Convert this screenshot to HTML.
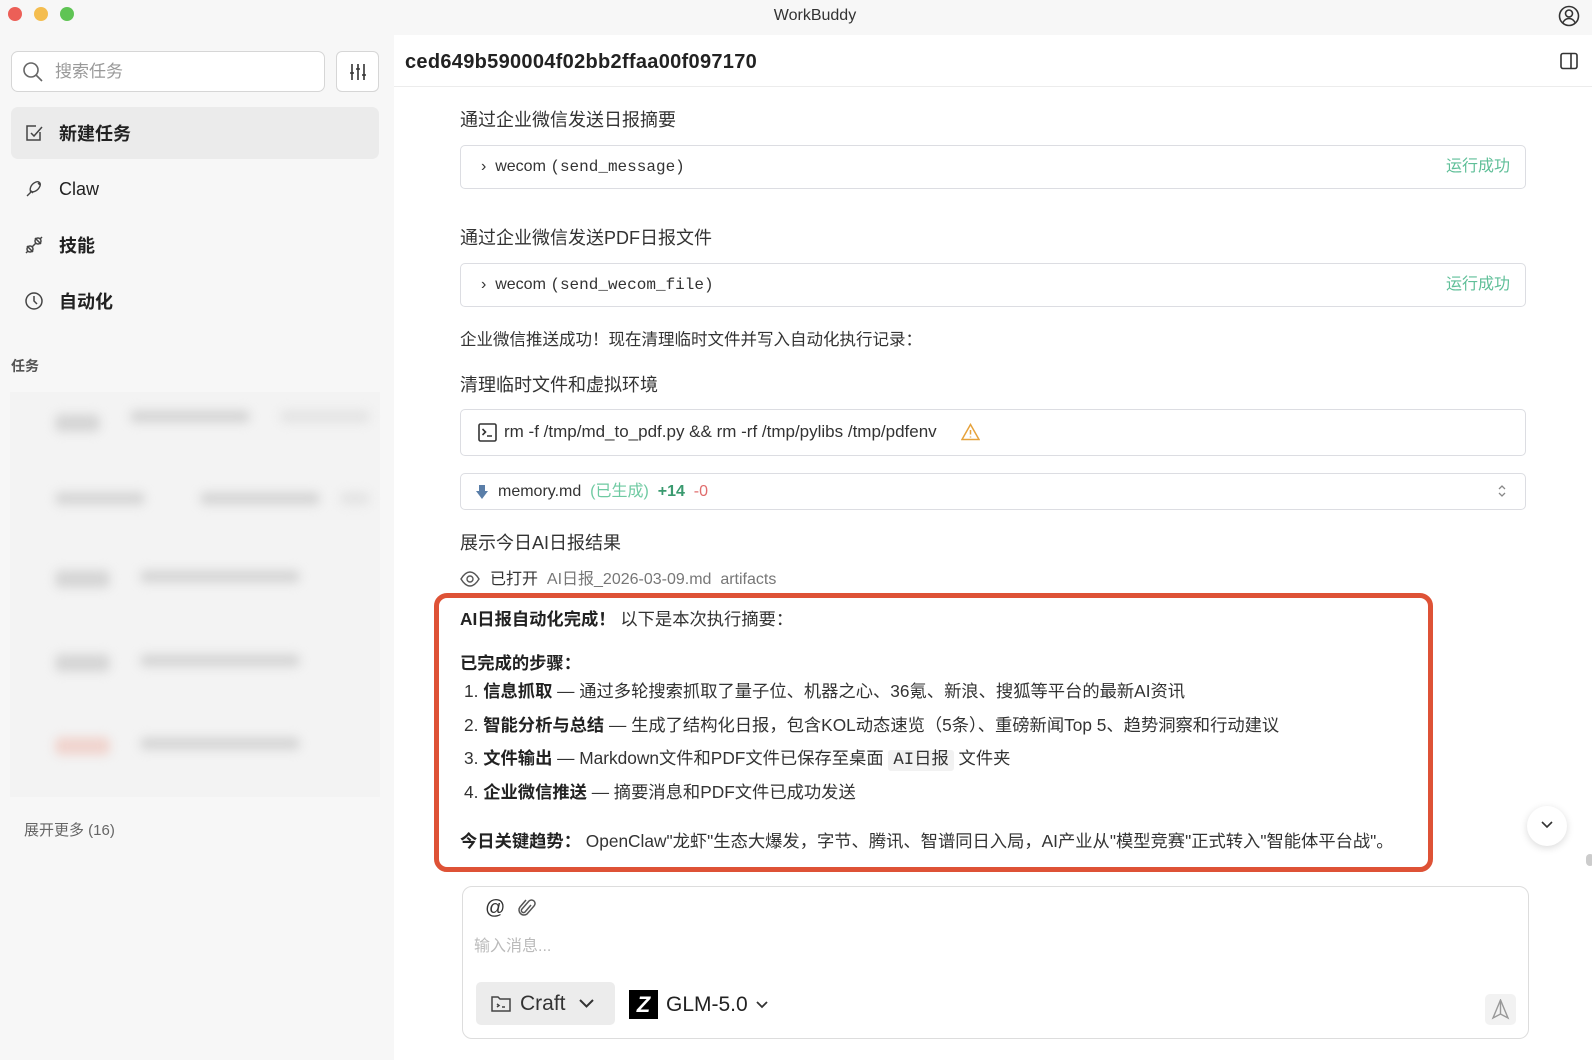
<!DOCTYPE html>
<html><head><meta charset="utf-8"><style>
*{box-sizing:border-box;margin:0;padding:0}
body{width:1592px;height:1060px;overflow:hidden;background:#f7f7f7;font-family:"Liberation Sans","Noto Sans CJK SC",sans-serif;color:#222;position:relative}
.a{position:absolute}
.t{white-space:nowrap;line-height:1.2}
.dot{width:14px;height:14px;border-radius:50%;top:7px}
.main{left:394px;top:35px;width:1198px;height:1025px;background:#fff}
.box{border:1px solid #dcdde2;border-radius:5px;background:#fff}
.mono{font-family:"Liberation Mono","Noto Sans CJK SC",monospace}
.h{font-size:18px;color:#333}
.ok{color:#5fbf98;font-size:16px}
.ln{font-size:17.3px;color:#333}
b{font-weight:700;color:#222}
.blur{filter:blur(5px);background:#d6d6d6;border-radius:6px;height:13px}
</style></head><body>
<div class="a dot" style="left:8px;background:#ec5f57"></div>
<div class="a dot" style="left:34px;background:#f4bd4f"></div>
<div class="a dot" style="left:60px;background:#5fc454"></div>
<div class="a t" style="left:0;width:1630px;text-align:center;top:6px;font-size:16px;color:#333">WorkBuddy</div>
<svg class="a" style="left:1558px;top:5px" width="22" height="22" viewBox="0 0 22 22" fill="none" stroke="#333" stroke-width="1.6"><circle cx="11" cy="11" r="9.5"/><circle cx="11" cy="8.5" r="3.5"/><path d="M5 17.5c1.5-3 3.5-4 6-4s4.5 1 6 4"/></svg>

<div class="a" style="left:11px;top:51px;width:314px;height:41px;background:#fff;border:1px solid #d6d6d6;border-radius:7px"></div>
<svg class="a" style="left:22px;top:61px" width="22" height="22" viewBox="0 0 22 22" fill="none" stroke="#666" stroke-width="1.6"><circle cx="9" cy="9" r="7"/><path d="M14 14l6 6"/></svg>
<div class="a t" style="left:55px;top:62px;font-size:17px;color:#999">搜索任务</div>
<div class="a" style="left:336px;top:51px;width:43px;height:41px;background:#fff;border:1px solid #d6d6d6;border-radius:6px"></div>
<svg class="a" style="left:347px;top:61px" width="22" height="22" viewBox="0 0 22 22" fill="none" stroke="#333" stroke-width="1.6"><path d="M5 3v16M11 3v16M17 3v16M3 12h4M9 8h4M15 14h4"/></svg>
<div class="a" style="left:11px;top:107px;width:368px;height:52px;background:#ebebeb;border-radius:7px"></div>
<svg class="a" style="left:24px;top:123px" width="20" height="20" viewBox="0 0 20 20" fill="none" stroke="#444" stroke-width="1.5"><path d="M16 9v8H3V3h9"/><path d="M7 10l3 3 8-9"/></svg>
<div class="a t" style="left:59px;top:124px;font-size:18px;font-weight:700">新建任务</div>
<svg class="a" style="left:24px;top:179px" width="20" height="20" viewBox="0 0 20 20" fill="none" stroke="#444" stroke-width="1.4"><path d="M3 17l4-4c-2-3 0-8 5-10 3-1 5 1 4 4-2 5-7 7-10 5M6 11l3 3M14 4l2 2"/></svg>
<div class="a t" style="left:59px;top:179px;font-size:18px">Claw</div>
<svg class="a" style="left:24px;top:235px" width="20" height="20" viewBox="0 0 20 20" fill="none" stroke="#444" stroke-width="1.5"><circle cx="6" cy="14" r="3"/><circle cx="14" cy="6" r="3"/><path d="M2 18l2-2M8 12l4-4M16 4l2-2M3 11l6 6M11 3l6 6"/></svg>
<div class="a t" style="left:59px;top:236px;font-size:18px;font-weight:700">技能</div>
<svg class="a" style="left:24px;top:291px" width="20" height="20" viewBox="0 0 20 20" fill="none" stroke="#444" stroke-width="1.5"><circle cx="10" cy="10" r="8"/><path d="M10 5v5l3 3"/></svg>
<div class="a t" style="left:59px;top:292px;font-size:18px;font-weight:700">自动化</div>
<div class="a t" style="left:11px;top:358px;font-size:14px;color:#555;font-weight:700">任务</div>
<div class="a" style="left:10px;top:392px;width:370px;height:405px;background:#f3f3f3">
 <div class="a blur" style="left:45px;top:22px;width:45px;height:18px"></div><div class="a blur" style="left:120px;top:18px;width:120px"></div><div class="a blur" style="left:270px;top:18px;width:90px;background:#e4e4e4"></div>
 <div class="a blur" style="left:45px;top:100px;width:90px"></div><div class="a blur" style="left:190px;top:100px;width:120px"></div><div class="a blur" style="left:330px;top:100px;width:30px;background:#e4e4e4"></div>
 <div class="a blur" style="left:45px;top:178px;width:55px;height:18px"></div><div class="a blur" style="left:130px;top:178px;width:160px"></div>
 <div class="a blur" style="left:45px;top:262px;width:55px;height:18px"></div><div class="a blur" style="left:130px;top:262px;width:160px"></div>
 <div class="a blur" style="left:45px;top:345px;width:55px;height:18px;background:#f0d4ce"></div><div class="a blur" style="left:130px;top:345px;width:160px"></div>
</div>
<div class="a t" style="left:24px;top:822px;font-size:15px;color:#666">展开更多 (16)</div>

<div class="a main"></div>
<div class="a t" style="left:405px;top:50px;font-size:20px;font-weight:700;color:#222;letter-spacing:0.3px">ced649b590004f02bb2ffaa00f097170</div>
<svg class="a" style="left:1559px;top:51px" width="20" height="20" viewBox="0 0 20 20" fill="none" stroke="#333" stroke-width="1.6"><rect x="2" y="2.5" width="16" height="15" rx="2"/><path d="M12 2.5v15"/></svg>
<div class="a" style="left:394px;top:86px;width:1198px;height:1px;background:#ececec"></div>

<div class="a t h" style="left:460px;top:110px">通过企业微信发送日报摘要</div>
<div class="a box" style="left:460px;top:145px;width:1066px;height:44px"></div>
<div class="a t" style="left:481px;top:157px;font-size:16px;color:#333">›&nbsp; wecom <span class="mono">(send_message)</span></div>
<div class="a t ok" style="left:1446px;top:157px">运行成功</div>

<div class="a t h" style="left:460px;top:228px">通过企业微信发送PDF日报文件</div>
<div class="a box" style="left:460px;top:263px;width:1066px;height:44px"></div>
<div class="a t" style="left:481px;top:275px;font-size:16px;color:#333">›&nbsp; wecom <span class="mono">(send_wecom_file)</span></div>
<div class="a t ok" style="left:1446px;top:275px">运行成功</div>

<div class="a t" style="left:460px;top:331px;font-size:16.5px;color:#333">企业微信推送成功！现在清理临时文件并写入自动化执行记录：</div>
<div class="a t h" style="left:460px;top:375px">清理临时文件和虚拟环境</div>
<div class="a box" style="left:460px;top:409px;width:1066px;height:47px"></div>
<svg class="a" style="left:478px;top:423px" width="19" height="19" viewBox="0 0 19 19" fill="none" stroke="#333" stroke-width="1.6"><rect x="1" y="1" width="17" height="17" rx="1.5"/><path d="M4.5 6l3 3-3 3M9 13h5"/></svg>
<div class="a t" style="left:504px;top:422px;font-size:17px;color:#333">rm -f /tmp/md_to_pdf.py &amp;&amp; rm -rf /tmp/pylibs /tmp/pdfenv</div>
<svg class="a" style="left:961px;top:423px" width="19" height="18" viewBox="0 0 19 18" fill="none" stroke="#e6a23c" stroke-width="1.5"><path d="M9.5 1.5L18 16.5H1z"/><path d="M9.5 7v4.5M9.5 13.5v1"/></svg>

<div class="a box" style="left:460px;top:473px;width:1066px;height:37px"></div>
<svg class="a" style="left:476px;top:485px" width="12" height="14" viewBox="0 0 12 14"><path d="M3 0h6v6h3l-6 8-6-8h3z" fill="#5a7ea8"/></svg>
<div class="a t" style="left:498px;top:482px;font-size:16px;color:#333">memory.md&nbsp; <span style="color:#6fcaa2">(已生成)</span>&nbsp; <span style="color:#3a9a6f;font-weight:700">+14</span>&nbsp; <span style="color:#e06c6c">-0</span></div>
<svg class="a" style="left:1497px;top:483px" width="10" height="16" viewBox="0 0 10 16" fill="none" stroke="#888" stroke-width="1.3"><path d="M2 6l3-3 3 3M2 10l3 3 3-3"/></svg>

<div class="a t h" style="left:460px;top:533px">展示今日AI日报结果</div>
<svg class="a" style="left:460px;top:570px" width="20" height="18" viewBox="0 0 20 18" fill="none" stroke="#555" stroke-width="1.4"><path d="M1 9c3-5 6-7 9-7s6 2 9 7c-3 5-6 7-9 7s-6-2-9-7z"/><circle cx="10" cy="9" r="3"/></svg>
<div class="a t" style="left:490px;top:570px;font-size:16px;color:#333">已打开&nbsp; <span style="color:#777">AI日报_2026-03-09.md&nbsp; artifacts</span></div>

<div class="a" style="left:434px;top:593px;width:999px;height:279px;border:5px solid #de5236;border-radius:13px"></div>
<div class="a t ln" style="left:460px;top:609px"><b>AI日报自动化完成！</b> 以下是本次执行摘要：</div>
<div class="a t ln" style="left:460px;top:653px"><b>已完成的步骤：</b></div>
<div class="a t ln" style="left:464px;top:681px">1. <b>信息抓取</b> — 通过多轮搜索抓取了量子位、机器之心、36氪、新浪、搜狐等平台的最新AI资讯</div>
<div class="a t ln" style="left:464px;top:715px">2. <b>智能分析与总结</b> — 生成了结构化日报，包含KOL动态速览（5条）、重磅新闻Top 5、趋势洞察和行动建议</div>
<div class="a t ln" style="left:464px;top:748px">3. <b>文件输出</b> — Markdown文件和PDF文件已保存至桌面 <span class="mono" style="background:#f2f2f2;padding:1px 5px;border-radius:3px">AI日报</span> 文件夹</div>
<div class="a t ln" style="left:464px;top:782px">4. <b>企业微信推送</b> — 摘要消息和PDF文件已成功发送</div>
<div class="a t ln" style="left:460px;top:831px"><b>今日关键趋势：</b> OpenClaw"龙虾"生态大爆发，字节、腾讯、智谱同日入局，AI产业从"模型竞赛"正式转入"智能体平台战"。</div>

<div class="a" style="left:1527px;top:806px;width:40px;height:40px;border-radius:50%;background:#fff;box-shadow:0 2px 8px rgba(0,0,0,.15)"></div>
<svg class="a" style="left:1540px;top:820px" width="14" height="10" viewBox="0 0 14 10" fill="none" stroke="#333" stroke-width="1.6"><path d="M2 2l5 5 5-5"/></svg>
<div class="a" style="left:1586px;top:854px;width:8px;height:12px;border-radius:4px;background:#ccc"></div>

<div class="a" style="left:462px;top:886px;width:1067px;height:153px;border:1px solid #ddd;border-radius:10px;background:#fff"></div>
<div class="a t" style="left:485px;top:896px;font-size:20px;color:#333">@</div>
<svg class="a" style="left:518px;top:898px" width="18" height="20" viewBox="0 0 18 20" fill="none" stroke="#555" stroke-width="1.5"><path d="M13 7l-6 7a2 2 0 01-3-3l7-8a3.5 3.5 0 015 5l-7 8a5 5 0 01-7-7l6-7"/></svg>
<div class="a t" style="left:474px;top:937px;font-size:16px;color:#bbb">输入消息...</div>
<div class="a" style="left:476px;top:982px;width:139px;height:43px;background:#ececec;border-radius:5px"></div>
<svg class="a" style="left:491px;top:995px" width="20" height="17" viewBox="0 0 20 17" fill="none" stroke="#444" stroke-width="1.5"><path d="M1 2h6l2 2h10v12H1z"/><path d="M6 9l2 1.5L6 12M11 12h3"/></svg>
<div class="a t" style="left:520px;top:991px;font-size:21px;color:#333">Craft</div>
<svg class="a" style="left:578px;top:998px" width="17" height="11" viewBox="0 0 17 11" fill="none" stroke="#333" stroke-width="2"><path d="M2 2l6.5 6.5L15 2"/></svg>
<div class="a" style="left:629px;top:990px;width:29px;height:29px;background:#000"></div>
<div class="a t" style="left:632px;top:992px;width:23px;text-align:center;font-size:22px;font-weight:700;color:#fff;font-style:italic">Z</div>
<div class="a t" style="left:666px;top:992px;font-size:21px;color:#222">GLM-5.0</div>
<svg class="a" style="left:755px;top:1000px" width="14" height="9" viewBox="0 0 14 9" fill="none" stroke="#333" stroke-width="1.8"><path d="M2 2l5 5 5-5"/></svg>
<div class="a" style="left:1485px;top:994px;width:31px;height:31px;background:#f2f2f2;border-radius:5px"></div>
<svg class="a" style="left:1491px;top:999px" width="19" height="21" viewBox="0 0 19 21" fill="none" stroke="#999" stroke-width="1.4"><path d="M9.5 1L2 19l7.5-4 7.5 4z"/><path d="M9.5 1v14"/></svg>
</body></html>
